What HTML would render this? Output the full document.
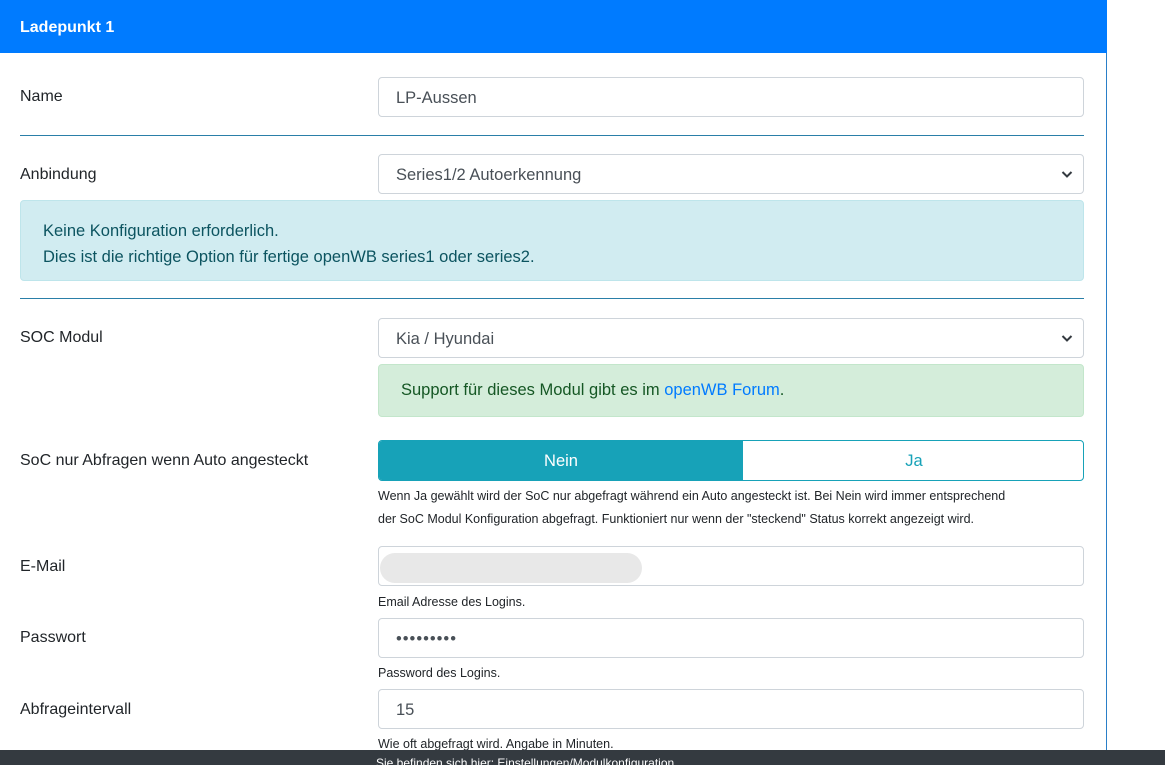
<!DOCTYPE html>
<html><head><style>
*{box-sizing:border-box}
body{margin:0;width:1165px;height:765px;overflow:hidden;background:#fff;font-family:"Liberation Sans",sans-serif;color:#212529;position:relative}
.card{position:absolute;left:0;top:0;width:1107px;height:765px;border-right:1px solid #2a7fc8}
.hdr{position:absolute;left:0;top:0;width:1107px;height:53px;background:#007bff;color:#fff;font-weight:bold;font-size:16px;padding:19px 20px}
.lbl{position:absolute;left:20px;font-size:16px}
.inp{position:absolute;left:378px;width:706px;height:40px;border:1px solid #ced4da;border-radius:4px;padding:11px 17px 0;font-size:16.5px;color:#495057}
.hr{position:absolute;left:20px;width:1064px;border-top:1px solid #2a7fa8}
.small{position:absolute;left:378px;font-size:12.5px;color:#212529}
.arrow{position:absolute;right:10px;top:13px}
</style></head><body>
<div class="card"></div>
<div class="hdr">Ladepunkt 1</div>
<div class="lbl" style="top:88px">Name</div>
<div class="inp" style="top:77px">LP-Aussen</div>
<div class="hr" style="top:135px"></div>
<div class="lbl" style="top:166px">Anbindung</div>
<div class="inp" style="top:154px">Series1/2 Autoerkennung<svg class="arrow" width="12" height="12" viewBox="0 0 12 12"><path d="M1.5 4l4.5 4.5L10.5 4" fill="none" stroke="#343a40" stroke-width="2"/></svg></div>
<div style="position:absolute;left:20px;top:200px;width:1064px;height:81px;background:#d1ecf1;border:1px solid #bee5eb;border-radius:4px;color:#0c5460;font-size:16.5px;padding:17px 22px;line-height:26px">Keine Konfiguration erforderlich.<br>Dies ist die richtige Option für fertige openWB series1 oder series2.</div>
<div class="hr" style="top:298px"></div>
<div class="lbl" style="top:329px">SOC Modul</div>
<div class="inp" style="top:318px">Kia / Hyundai<svg class="arrow" width="12" height="12" viewBox="0 0 12 12"><path d="M1.5 4l4.5 4.5L10.5 4" fill="none" stroke="#343a40" stroke-width="2"/></svg></div>
<div style="position:absolute;left:378px;top:364px;width:706px;height:53px;background:#d4edda;border:1px solid #c3e6cb;border-radius:4px;color:#155724;font-size:16.5px;padding:16px 22px">Support für dieses Modul gibt es im <span style="color:#007bff">openWB Forum</span>.</div>
<div class="lbl" style="top:452px">SoC nur Abfragen wenn Auto angesteckt</div>
<div style="position:absolute;left:378px;top:440px;width:706px;height:41px;border:1px solid #17a2b8;border-radius:4px;overflow:hidden;font-size:16.5px">
<div style="position:absolute;left:0;top:0;width:364px;height:41px;background:#17a2b8;color:#fff;text-align:center;line-height:40px">Nein</div>
<div style="position:absolute;left:364px;top:0;width:342px;height:41px;color:#17a2b8;text-align:center;line-height:40px">Ja</div></div>
<div class="small" style="top:485px;line-height:23px">Wenn Ja gewählt wird der SoC nur abgefragt während ein Auto angesteckt ist. Bei Nein wird immer entsprechend<br>der SoC Modul Konfiguration abgefragt. Funktioniert nur wenn der "steckend" Status korrekt angezeigt wird.</div>
<div class="lbl" style="top:558px">E-Mail</div>
<div class="inp" style="top:546px"></div>
<div style="position:absolute;left:380px;top:553px;width:262px;height:30px;background:#e8e8e8;border-radius:15px"></div>
<div class="small" style="top:595px">Email Adresse des Logins.</div>
<div class="lbl" style="top:629px">Passwort</div>
<div class="inp" style="top:618px;letter-spacing:1px">•••••••••</div>
<div class="small" style="top:666px">Password des Logins.</div>
<div class="lbl" style="top:701px">Abfrageintervall</div>
<div class="inp" style="top:689px">15</div>
<div class="small" style="top:737px">Wie oft abgefragt wird. Angabe in Minuten.</div>
<div style="position:absolute;left:0;top:750px;width:1165px;height:15px;background:#343a40;color:#fff;font-size:12px;padding-left:376px;line-height:26px;overflow:hidden">Sie befinden sich hier: Einstellungen/Modulkonfiguration</div>
</body></html>
